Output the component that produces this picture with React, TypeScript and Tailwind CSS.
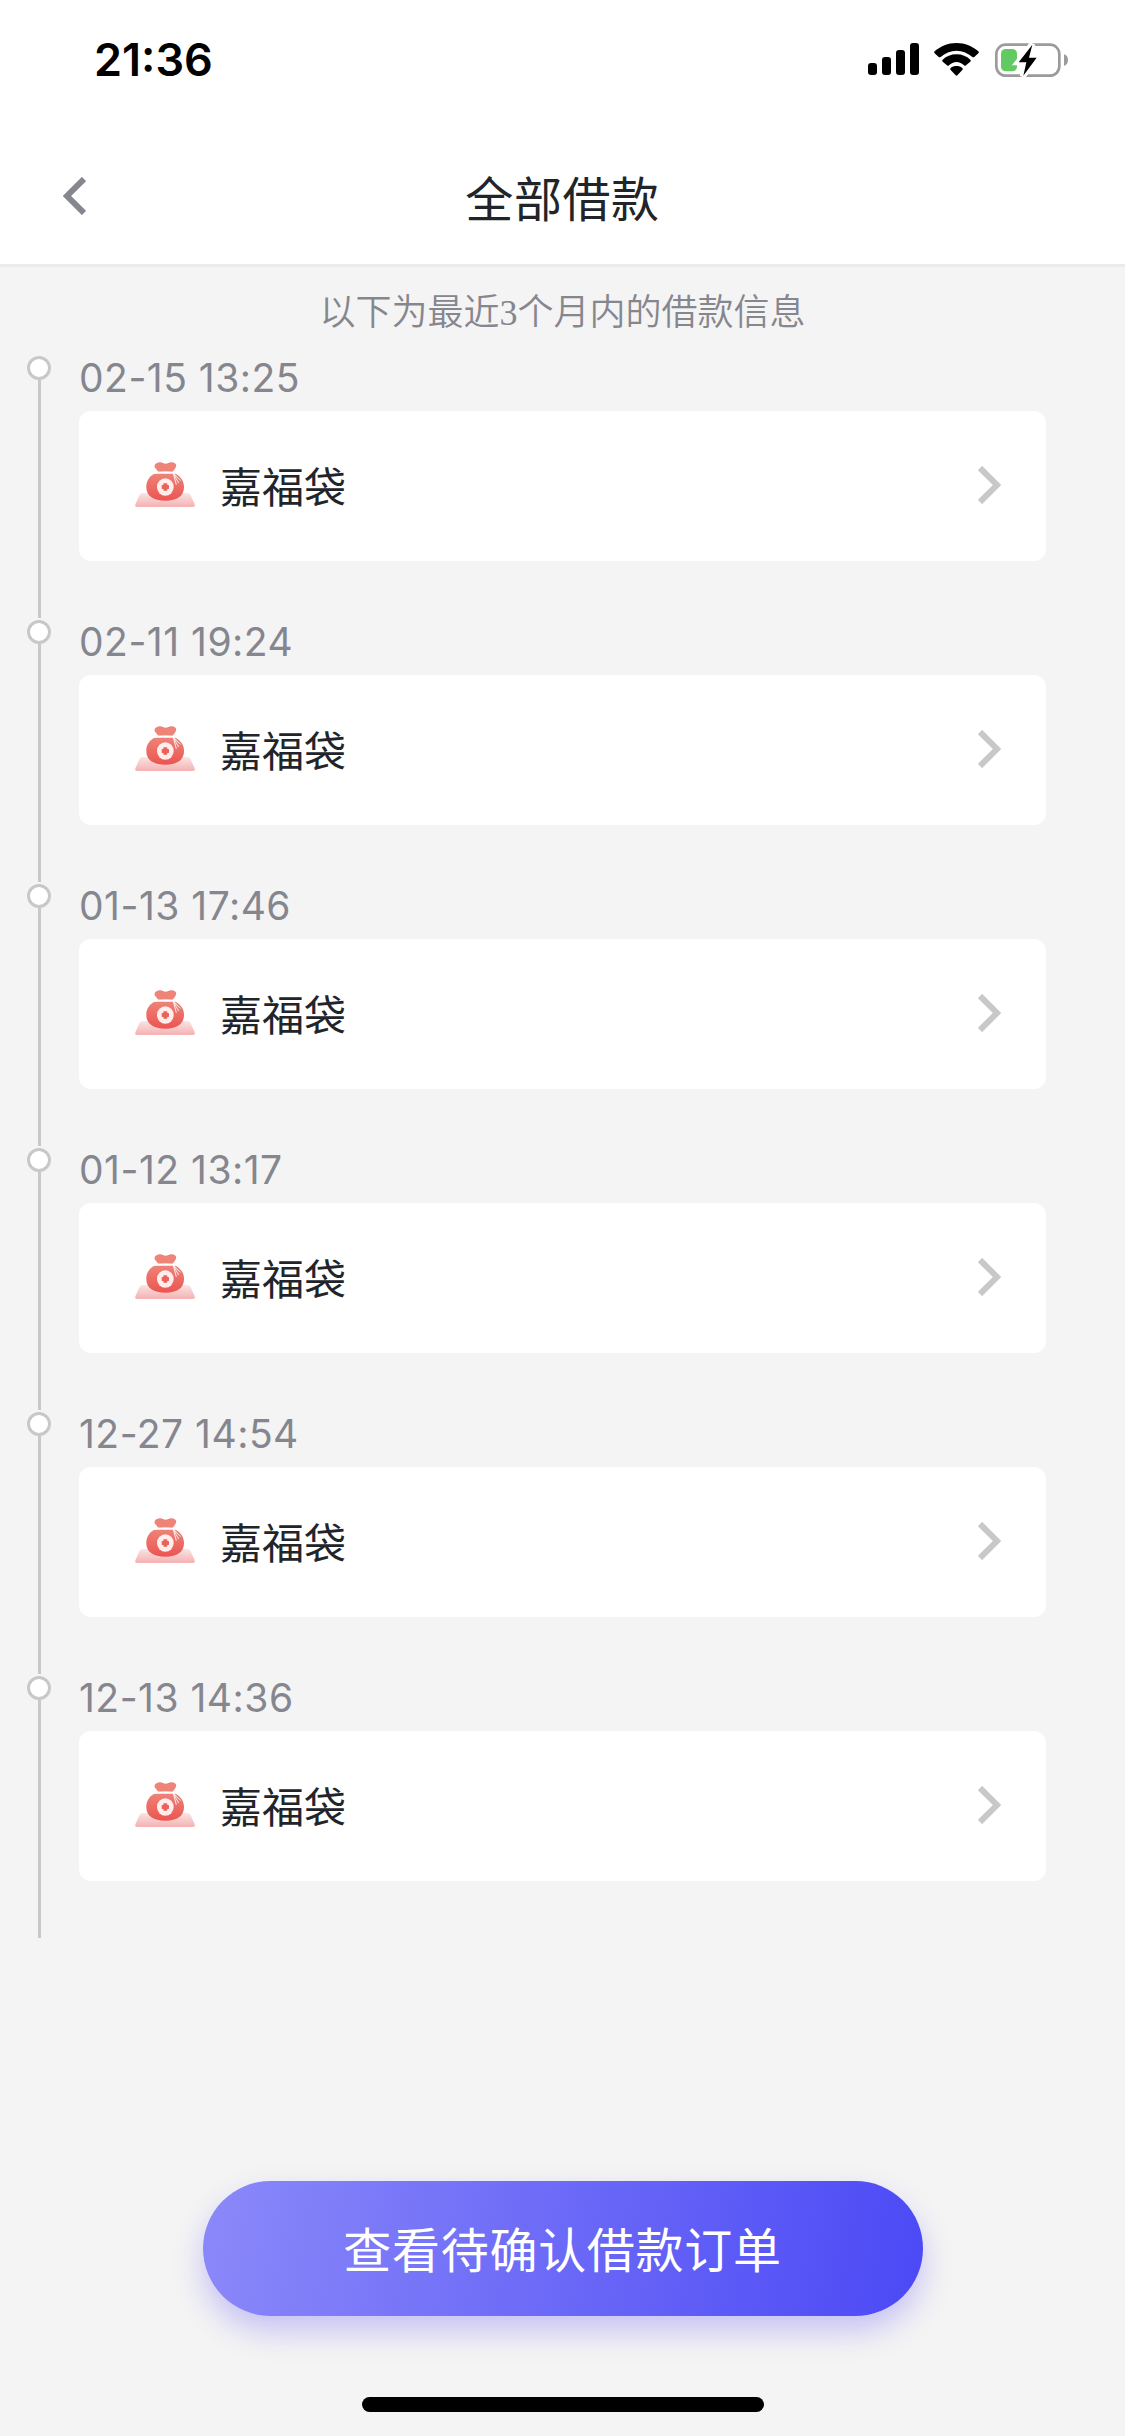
import React from 'react'

type Loan = {
  date: string
  name: string
}

const loans: Loan[] = [
  { date: '02-15 13:25', name: '嘉福袋' },
  { date: '02-11 19:24', name: '嘉福袋' },
  { date: '01-13 17:46', name: '嘉福袋' },
  { date: '01-12 13:17', name: '嘉福袋' },
  { date: '12-27 14:54', name: '嘉福袋' },
  { date: '12-13 14:36', name: '嘉福袋' },
]

function SignalIcon() {
  return (
    <svg viewBox="0 0 153 96" className="h-8 w-[51px]">
      <rect x="0" y="60" width="27" height="36" rx="9" />
      <rect x="42" y="42" width="27" height="54" rx="9" />
      <rect x="84" y="21" width="27" height="75" rx="9" />
      <rect x="126" y="0" width="27" height="96" rx="9" />
    </svg>
  )
}

function WifiIcon() {
  return (
    <svg viewBox="0 0 135 99" className="h-[33px] w-[45px]">
      <path d="M67.500 0C93 0 116 10 133 25Q136 28 133 31L121 42Q118 44 115 42C102 30 86 23 67.500 23S33 30 20 42Q17 44 14 42L2 31Q-1 28 2 25C19 10 42 0 67.500 0Z" />
      <path d="M67.500 34C84 34 98 40 109 50Q112 53 109 56L96 67Q93 70 90 67C84 61 76 57 67.500 57S51 61 45 67Q42 70 39 67L26 56Q23 53 26 50C37 40 51 34 67.500 34Z" />
      <path d="M67.500 69C74 69 80 71 85 75Q88 78 85 81L70 97Q67.500 99 65 97L50 81Q47 78 50 75C55 71 61 69 67.500 69Z" />
    </svg>
  )
}

function BatteryIcon() {
  return (
    <svg viewBox="0 0 219 105" className="h-[35px] w-[73px]">
      <rect
        x="4"
        y="5"
        width="189"
        height="93"
        rx="28"
        fill="none"
        stroke="#9b9b9b"
        strokeWidth="8"
      />
      <path d="M207 34Q219 38 219 51T207 69Z" fill="#9b9b9b" />
      <rect x="18" y="18" width="48" height="67" rx="14" fill="#62ca62" />
      <path
        d="M112 3L69 58H92L83 100L126 44H103Z"
        stroke="#fff"
        strokeWidth="18"
      />
      <path d="M112 5L71 58H94L85 98L125 44H102Z" />
    </svg>
  )
}

function Chevron({ className }: { className: string }) {
  return (
    <svg
      viewBox="0 0 23 38"
      fill="none"
      stroke="currentColor"
      strokeWidth="6"
      className={className}
    >
      <path d="M2 2L19 19L2 36" />
    </svg>
  )
}

function BagIcon() {
  return (
    <svg viewBox="0 0 180 135" className="h-[45px] w-[60px]">
      <defs>
        <linearGradient id="bag" x1="0" y1="0" x2="0" y2="1">
          <stop offset="0" stopColor="#ee8378" />
          <stop offset="1" stopColor="#ec5450" />
        </linearGradient>
        <linearGradient id="mat" x1="0" y1="0" x2="0" y2="1">
          <stop offset="0" stopColor="#fbe3e3" />
          <stop offset="1" stopColor="#f5b1b2" />
        </linearGradient>
      </defs>
      <path
        d="M24 93H156Q164 93 167 100L179 127Q182 135 173 135H7Q-2 135 1 127L13 100Q16 93 24 93Z"
        fill="url(#mat)"
      />
      <path
        d="M58 35H122C139 44 148 59 147 77C146 101 127 116 91 116S35 101 34 77C33 59 41 44 58 35Z"
        fill="url(#bag)"
      />
      <path
        d="M74 1C81 0 86 5 92 5S103 0 111 1C120 2 126 8 123 15L115 27Q114 29 110 29H73Q69 29 68 27L60 17C55 9 64 2 74 1Z"
        fill="#ee8378"
      />
      <path
        d="M58 33Q91 28 123 33"
        fill="none"
        stroke="#fff"
        strokeWidth="4"
      />
      <ellipse cx="91" cy="75" rx="25" ry="26" fill="#fdeeed" />
      <path
        d="M87 66H95V71H100V79H95V84H87V79H82V71H87Z"
        fill="#ec625b"
        stroke="#ec625b"
        strokeWidth="4"
        strokeLinejoin="round"
      />
      <path
        d="M115 34L137 55M115 34L131 63M115 34L124 68"
        fill="none"
        stroke="#fdeeed"
        strokeWidth="3"
      />
    </svg>
  )
}

function StatusBar() {
  return (
    <div className="flex h-[120px] items-start justify-between pr-[57px] pl-[94px]">
      <span className="mt-8 font-['Inter'] text-[45px] leading-[55px] font-semibold">
        21:36
      </span>
      <div className="mt-[43px] flex items-start">
        <SignalIcon />
        <div className="ml-[15px]">
          <WifiIcon />
        </div>
        <div className="ml-4">
          <BatteryIcon />
        </div>
      </div>
    </div>
  )
}

function LoanItem({ loan }: { loan: Loan }) {
  return (
    <li className="flex h-[264px]">
      <div className="mr-px flex w-[78px] shrink-0 flex-col items-center">
        <span className="h-6 w-6 shrink-0 rounded-full border-[3px] border-[#c8c8c8] bg-white" />
        <span className="mb-[2px] w-[3px] flex-1 bg-[#c8c8c8]" />
      </div>
      <div className="w-[967px]">
        <time className="block h-[55px] pt-px font-['Inter'] text-[39px] leading-[42px] tracking-[0.5px] text-[#86868f]">
          {loan.date}
        </time>
        <div className="flex h-[150px] items-center rounded-[12px] bg-white pr-[45px] pl-14">
          <div className="mb-1">
            <BagIcon />
          </div>
          <span className="mb-[3px] ml-[25px] flex-1 text-[42px] leading-none text-[#212529]">
            {loan.name}
          </span>
          <Chevron className="mb-[2px] h-[38px] w-[23px] text-[#c8c8c8]" />
        </div>
      </div>
    </li>
  )
}

export default function App() {
  return (
    <div className="flex h-[2436px] w-[1125px] flex-col bg-[#f4f4f4] font-['Noto_Sans_CJK_SC',sans-serif]">
      <header className="h-[267px] shrink-0 border-b-[3px] border-[#ebebeb] bg-white">
        <StatusBar />
        <div className="flex h-[144px] items-start px-[63px]">
          <Chevron className="mt-[57px] h-[38px] w-[23px] rotate-180 text-[#86868f]" />
          <h1 className="mt-[46px] mr-[23px] flex-1 text-center text-[48px] leading-[60px] tracking-[0.6px] text-[#212529]">
            全部借款
          </h1>
        </div>
      </header>

      <p className="h-[89px] shrink-0 pt-[21px] text-center font-['Liberation_Serif','Noto_Sans_CJK_SC_DemiLight','Noto_Sans_CJK_SC',sans-serif] text-[36px] leading-[50px] font-[350] text-[#86868f]">
        以下为最近3个月内的借款信息
      </p>

      <ul className="shrink-0">
        {loans.map(loan => (
          <LoanItem key={loan.date} loan={loan} />
        ))}
      </ul>

      <button className="mt-[241px] h-[135px] w-[720px] shrink-0 self-center rounded-full bg-[linear-gradient(100deg,#8b89f9_0%,#4b49f5_100%)] pb-[4px] text-[48px] tracking-[0.7px] text-white shadow-[0_15px_30px_rgba(75,60,245,0.27)]">
        查看待确认借款订单
      </button>
      <div className="mt-[81px] h-[15px] w-[402px] shrink-0 self-center rounded-full bg-black" />
    </div>
  )
}
